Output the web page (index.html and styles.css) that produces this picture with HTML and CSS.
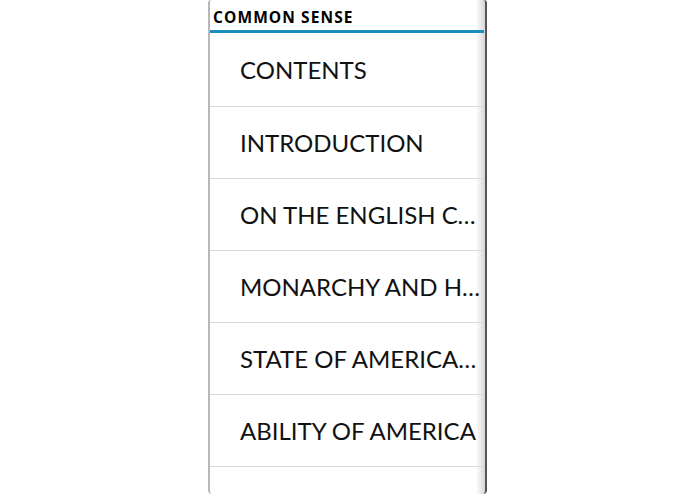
FILE: index.html
```html
<!DOCTYPE html>
<html lang="en">
<head>
    <meta charset="UTF-8">
    <meta name="viewport" content="width=device-width, initial-scale=1.0">
    <title>Common Sense</title>
    <link rel="stylesheet" href="styles.css">
</head>
<body>
    <div class="screen">
        <div class="title-bar">COMMON SENSE</div>
        <ul class="chapters">
            <li class="chapter first">CONTENTS</li>
            <li class="chapter">INTRODUCTION</li>
            <li class="chapter">ON THE ENGLISH CONSTITUTION</li>
            <li class="chapter">MONARCHY AND HEREDITARY SUCCESSION</li>
            <li class="chapter">STATE OF AMERICAN AFFAIRS</li>
            <li class="chapter">ABILITY OF AMERICA</li>
            <li class="chapter"></li>
        </ul>
    </div>
</body>
</html>
```

FILE: styles.css
```css
html, body {
    margin: 0;
    padding: 0;
    background: #fff;
    height: 100%;
    overflow: hidden;
}
body {
    display: flex;
    justify-content: center;
    font-family: Lato, "Open Sans", sans-serif;
}
.screen {
    width: 279px;
    height: 494px;
    box-sizing: border-box;
    border-left: 2px solid #b8b8b8;
    border-right: 2px solid #555;
    border-radius: 3px 3px 4px 4px;
    background: linear-gradient(to right, #fff 0, #fff 266px, #d6d6d6 275px);
    overflow: hidden;
}
.title-bar {
    height: 30px;
    padding: 0 0 0 3px;
    line-height: 34px;
    font-family: "Open Sans", Lato, sans-serif;
    font-size: 15.5px;
    font-weight: bold;
    letter-spacing: 1.1px;
    color: #000;
    border-bottom: 3px solid #1a8fc0;
    margin-right: 1px;
}
.chapters {
    list-style: none;
    margin: 0;
    padding: 0;
}
.chapter {
    height: 71px;
    line-height: 71px;
    padding: 0 2px 0 30px;
    font-size: 24px;
    color: #111;
    border-bottom: 1px solid #dadada;
    white-space: nowrap;
    overflow: hidden;
    text-overflow: ellipsis;
}
.chapter.first {
    height: 73px;
    line-height: 73px;
}
```
